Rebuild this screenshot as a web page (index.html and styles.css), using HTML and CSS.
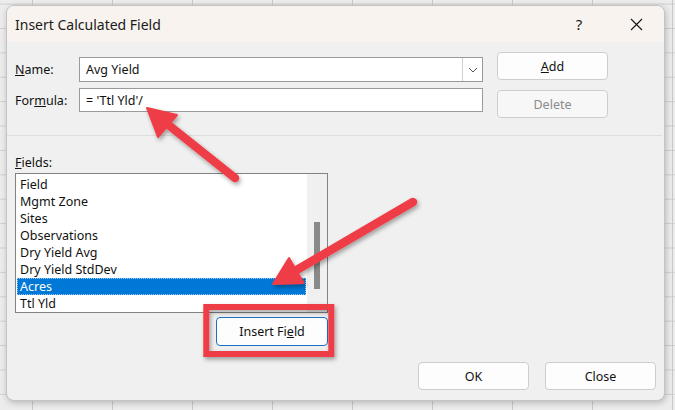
FILE: index.html
```html
<!DOCTYPE html>
<html>
<head>
<meta charset="utf-8">
<link rel="stylesheet" href="styles.css">
</head>
<body>
<div class="sheet">
  <div class="dialog">
    <div class="titlebar">
      <span class="title">Insert Calculated Field</span>
      <span class="tb-btn help">?</span>
      <span class="tb-btn close">
        <svg width="13" height="13" viewBox="0 0 13 13"><path d="M1 1L12 12M12 1L1 12" stroke="#1a1a1a" stroke-width="1.2" fill="none"/></svg>
      </span>
    </div>
    <div class="content">
      <div class="top">
        <div class="form">
          <span class="lbl"><u>N</u>ame:</span>
          <div class="box combo">
            <span class="val">Avg Yield</span>
            <span class="drop"><svg width="10" height="6" viewBox="0 0 10 6"><path d="M1 1L5 5L9 1" stroke="#555" stroke-width="1" fill="none"/></svg></span>
          </div>
          <span class="lbl">For<u>m</u>ula:</span>
          <div class="box field"><span class="val">= 'Ttl Yld'/</span></div>
        </div>
        <div class="side">
          <button class="btn"><u>A</u>dd</button>
          <button class="btn disabled">Delete</button>
        </div>
      </div>
      <div class="sep"></div>
      <div class="fields-label"><u>F</u>ields:</div>
      <div class="listbox">
        <div class="items">
          <div class="item">Field</div>
          <div class="item">Mgmt Zone</div>
          <div class="item">Sites</div>
          <div class="item">Observations</div>
          <div class="item">Dry Yield Avg</div>
          <div class="item">Dry Yield StdDev</div>
          <div class="item selected">Acres</div>
          <div class="item">Ttl Yld</div>
        </div>
        <div class="scroll"><div class="thumb"></div></div>
      </div>
      <div class="insert-row">
        <button class="btn default">Insert Fi<u>e</u>ld</button>
      </div>
      <div class="footer">
        <button class="btn">OK</button>
        <button class="btn">Close</button>
      </div>
    </div>
  </div>
  <svg class="annot" width="675" height="410" viewBox="0 0 675 410">
    <defs>
      <filter id="sh" x="-20%" y="-20%" width="140%" height="140%">
        <feDropShadow dx="1.5" dy="2.5" stdDeviation="2" flood-color="#000" flood-opacity="0.35"/>
      </filter>
    </defs>
    <g filter="url(#sh)" fill="#ef3e46" stroke="#ef3e46">
      <line x1="235" y1="178" x2="166" y2="123" stroke-width="8.5" stroke-linecap="round"/>
      <polygon points="147,108 158,137 177,115" stroke-width="2" stroke-linejoin="round"/>
      <line x1="413" y1="202" x2="295" y2="271" stroke-width="8.5" stroke-linecap="round"/>
      <polygon points="273,284 303.6,283 289,258" stroke-width="2" stroke-linejoin="round"/>
      <rect x="206.3" y="307" width="125" height="47" fill="none" stroke-width="6"/>
    </g>
  </svg>
</div>
</body>
</html>
```
FILE: styles.css
```css
* { box-sizing: border-box; }
html, body { margin: 0; padding: 0; }
body {
  width: 675px;
  height: 410px;
  overflow: hidden;
  font-family: "Noto Sans", "Open Sans", sans-serif;
  font-size: 12.5px;
  color: #111;
}
.sheet {
  position: relative;
  width: 675px;
  height: 410px;
  padding: 5px 0 0 6px;
  background-color: #ececec;
  background-image:
    linear-gradient(to right, #c9c9c9 1px, transparent 1px),
    linear-gradient(to bottom, #cfcfcf 1px, transparent 1px);
  background-size: 80px 100%, 100% 24.4px;
  background-position: 32px 0, 0 3.6px;
}
.dialog {
  width: 659px;
  height: 396px;
  border-radius: 8px;
  background: #f0f0f0;
  border: 1px solid #c4c4c4;
  box-shadow: 1px 2px 6px rgba(0,0,0,0.22);
  display: flex;
  flex-direction: column;
  overflow: hidden;
}
.titlebar {
  height: 36px;
  background: #f8f3ee;
  display: flex;
  align-items: center;
  padding-left: 8px;
  flex: none;
}
.title {
  flex: 1;
  font-size: 14px;
  color: #1a1a1a;
}
.tb-btn {
  width: 46px;
  height: 36px;
  display: flex;
  align-items: center;
  justify-content: center;
  color: #1a1a1a;
}
.help { font-size: 15px; margin-right: 11px; }
.close { margin-right: 5px; }
.content {
  flex: 1;
  display: flex;
  flex-direction: column;
  padding: 0 8px 10px 8px;
}
.top {
  display: flex;
  align-items: flex-start;
}
.form {
  margin-top: 15px;
  display: grid;
  grid-template-columns: 64px 404px;
  grid-template-rows: 25px 24px;
  row-gap: 6px;
  align-items: center;
}
.lbl { line-height: 17px; }
.box {
  height: 100%;
  background: #fff;
  border: 1px solid #9a9a9a;
  display: flex;
  align-items: center;
}
.val { flex: 1; padding-left: 6px; }
.drop {
  width: 20px;
  height: 100%;
  border-left: 1px solid #cfcfcf;
  display: flex;
  align-items: center;
  justify-content: center;
}
.side {
  margin-top: 10px;
  margin-left: 14px;
  display: flex;
  flex-direction: column;
  gap: 10px;
}
.btn {
  font-family: inherit;
  font-size: 12.5px;
  color: #111;
  width: 111px;
  height: 28px;
  background: #fdfdfd;
  border: 1px solid #cdcdcd;
  border-radius: 4px;
  padding: 0;
}
.btn.disabled { color: #8a8a8a; background: #f7f7f7; }
.sep {
  margin-top: 17px;
  height: 1px;
  background: #dedede;
  margin-left: -8px;
  margin-right: -6px;
}
.fields-label {
  margin-top: 18px;
  line-height: 17px;
  height: 17px;
}
.listbox {
  margin-top: 2px;
  width: 313px;
  height: 140px;
  border: 1px solid #828282;
  background: #fff;
  display: flex;
}
.items {
  flex: 1;
  padding: 2px 1px 0 1px;
}
.item {
  height: 17px;
  line-height: 17px;
  padding-left: 3px;
}
.item.selected {
  background: #0078d7;
  color: #fff;
  outline: 1px dotted #9cc7ee;
  outline-offset: -1px;
}
.scroll {
  width: 20px;
  background: #f0f0f0;
  position: relative;
}
.thumb {
  margin-top: 48px;
  margin-left: 7px;
  width: 6px;
  height: 67px;
  background: #8a8a8a;
}
.insert-row {
  width: 313px;
  display: flex;
  justify-content: flex-end;
  margin-top: 4px;
}
.btn.default {
  width: 112px;
  height: 29px;
  border: 1px solid #1a6fc4;
  background: #fdfdfd;
}
.footer {
  margin-top: auto;
  display: flex;
  justify-content: flex-end;
  gap: 16px;
}
.annot {
  position: absolute;
  left: 0;
  top: 0;
  pointer-events: none;
}
```
